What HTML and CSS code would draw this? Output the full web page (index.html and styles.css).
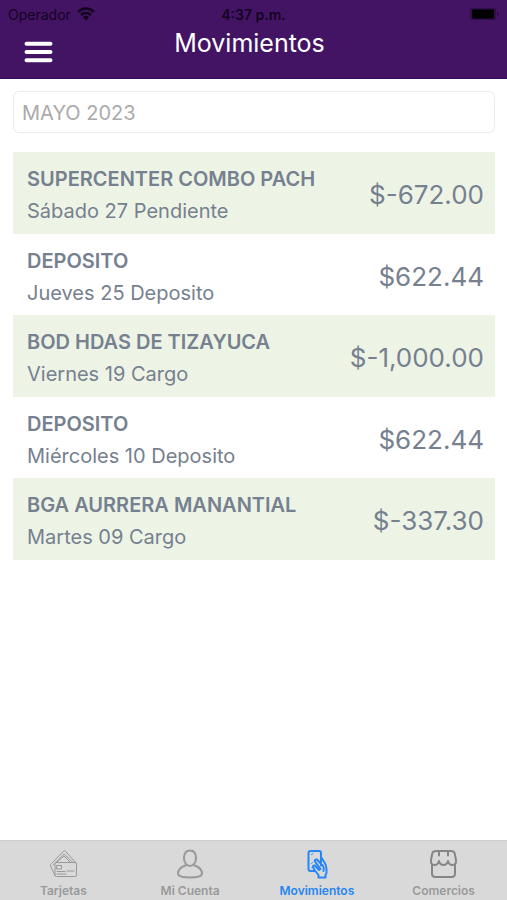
FILE: index.html
```html
<!DOCTYPE html>
<html lang="es">
<head>
<meta charset="utf-8">
<meta name="viewport" content="width=device-width, initial-scale=1">
<title>Movimientos</title>
<link rel="stylesheet" href="styles.css">
</head>
<body>
<header class="header">
  <div class="status">
    <span class="carrier">Operador
      <svg class="wifi" viewBox="0 0 18 14" aria-hidden="true"><path d="M1.2 4.800a11 11 0 0 1 15.600 0M4 8a7.200 7.200 0 0 1 10 0" fill="none" stroke="currentColor" stroke-width="2.600"/><path d="M5.900 10.200a4.500 4.500 0 0 1 6.200 0L9 13.600z" fill="currentColor"/></svg>
    </span>
    <time class="clock">4:37 p.m.</time>
    <svg class="battery" viewBox="0 0 29 12" aria-hidden="true"><rect x="0" y="0" width="26" height="12" rx="2" fill="#310d4b"/><rect x="2" y="1.500" width="22" height="9" rx="1" fill="#000"/><path d="M27 4v4q1.500-.5 1.500-2T27 4z" fill="#28083f"/></svg>
  </div>
  <div class="titlebar">
    <button class="menu" type="button" aria-label="Menú">
      <svg viewBox="0 0 28 22" aria-hidden="true"><path d="M2.500 3h23M2.500 11h23M2.500 19h23" stroke="#fff" stroke-width="4" stroke-linecap="round"/></svg>
    </button>
    <h1 class="title">Movimientos</h1>
  </div>
</header>
<main class="content">
  <input class="month" type="text" value="MAYO 2023" aria-label="Mes" readonly>
  <ul class="list">
    <li class="row"><div><h2 class="name">SUPERCENTER COMBO PACH</h2><p class="detail">Sábado 27 Pendiente</p></div><span class="amount">$-672.00</span></li>
    <li class="row"><div><h2 class="name">DEPOSITO</h2><p class="detail">Jueves 25 Deposito</p></div><span class="amount">$622.44</span></li>
    <li class="row"><div><h2 class="name">BOD HDAS DE TIZAYUCA</h2><p class="detail">Viernes 19 Cargo</p></div><span class="amount">$-1,000.00</span></li>
    <li class="row"><div><h2 class="name">DEPOSITO</h2><p class="detail">Miércoles 10 Deposito</p></div><span class="amount">$622.44</span></li>
    <li class="row"><div><h2 class="name">BGA AURRERA MANANTIAL</h2><p class="detail">Martes 09 Cargo</p></div><span class="amount">$-337.30</span></li>
  </ul>
</main>
<nav class="tabs">
  <a class="tab" href="#tarjetas">
    <svg class="icon thin" viewBox="0 0 30 30" aria-hidden="true"><path d="M8 13.500h19q1.500 0 1.500 1.500v11q0 1.500-1.500 1.500H8.500Q7 27.500 7 26V14.500q0-1 1-1zM7 26.500 2.500 17q-.5-1.500 1-2.500L15.500 2.300q1-.8 2 0L28 14M5 16.500 16 5l9 8.500M8.500 13.500 16 7l6.500 6.500"/><path d="M9 16.500h4.500V20H9zM9 22.500h8M19 22h7M9 25h9"/></svg>
    Tarjetas
  </a>
  <a class="tab" href="#cuenta">
    <svg class="icon" viewBox="0 0 30 30" aria-hidden="true"><path d="M15 1.500c-4 0-6 2.800-6 7.500 0 4 2.200 8 6 8s6-4 6-8c0-4.700-2-7.500-6-7.500zM10.500 16.500C6 18 3 20.500 3 24.500c0 3 5 4 12 4s12-1 12-4c0-4-3-6.500-7.500-8"/></svg>
    Mi Cuenta
  </a>
  <a class="tab active" href="#movimientos" aria-current="page">
    <svg class="icon" viewBox="0 0 30 30" aria-hidden="true"><path d="M12.500 22H8.500Q6.500 22 6.500 20V4Q6.500 2 8.500 2h8.500Q19 2 19 4v12.500M19 8l3.500 5.500q2 3 2 6.500v3.500q0 1.500-1 2.500v2.500h-7V26l-4-5M12.500 21l-1.500-3q0-2 2-1.500l4 4.500 1.500-1-5.500-7.500q-.5-2.500 2-2l6 6.500q1.500 2 .5 5"/><path class="fine" d="M9.500 5.500 11 4.500M9.500 19l1-1M9.500 14.500l1-1"/></svg>
    Movimientos
  </a>
  <a class="tab store" href="#comercios">
    <svg class="icon" viewBox="0 0 30 30" aria-hidden="true"><path d="M7 2h15q3 0 3.700 2.500L27 11q.5 5-3.500 5-3.500 0-4.500-4-1 4-4.500 4T10 12q-1 4-4.500 4-4 0-3.500-5L3.300 4.500Q4 2 7 2zM10 2v4.500M19 2v4.500M3 16v8.500Q3 28 6.500 28h16q3.500 0 3.500-3.500V16"/></svg>
    Comercios
  </a>
</nav>
</body>
</html>
```
FILE: styles.css
```css
* { box-sizing: border-box; }

body {
  margin: 0;
  min-height: 100vh;
  display: flex;
  flex-direction: column;
  background: #fff;
  color: #76808f;
  font-family: Inter, "Liberation Sans", sans-serif;
}

h1, h2, p, ul { margin: 0; padding: 0; }

.header {
  padding-bottom: 10px;
  background: #431464;
  border-bottom: 1px solid #2f0d58;
}

.status {
  display: grid;
  grid-template-columns: 1fr auto 1fr;
  align-items: center;
  height: 28px;
  padding: 0 8px;
  color: #12031f;
  font-size: 14px;
}

.carrier { display: flex; align-items: center; gap: 6px; }
.wifi { width: 18px; height: 14px; }
.clock { font-weight: 600; }
.battery { width: 29px; height: 12px; justify-self: end; }

.titlebar {
  display: grid;
  grid-template-columns: 1fr auto 1fr;
  height: 40px;
  padding: 0 32px 0 24px;
}

.menu {
  justify-self: start;
  align-self: end;
  display: flex;
  padding: 0 0 2px;
  border: 0;
  background: none;
}

.menu svg { width: 29px; height: 28px; }

.title {
  color: #fff;
  font-size: 25px;
  font-weight: 400;
  line-height: 30px;
}

.content { flex: 1; padding: 12px 12px 12px 13px; }

.month {
  display: block;
  width: 100%;
  height: 42px;
  padding: 1px 8px 0;
  border: 1px solid #ebebee;
  border-radius: 6px;
  background: #fff;
  color: #aaa;
  font: 20px Inter, "Liberation Sans", sans-serif;
}

.list { margin-top: 19px; list-style: none; }

.row {
  display: flex;
  align-items: center;
  justify-content: space-between;
  height: 81px;
  padding: 4px 11px 0 14px;
}

.row:nth-child(odd) { height: 82px; background: #edf4e6; }

.name { font-size: 20px; font-weight: 600; line-height: 32px; }
.detail { font-size: 20px; line-height: 32px; }
.amount { font-size: 26px; line-height: 32px; }

.tabs {
  display: grid;
  grid-template-columns: repeat(4, 1fr);
  height: 60px;
  background: #d9d9d9;
  border-top: 1px solid #cdcdcd;
}

.tab {
  display: flex;
  flex-direction: column;
  align-items: center;
  gap: 4px;
  padding-top: 8px;
  color: #999;
  font-size: 12px;
  font-weight: 600;
  line-height: 16px;
  text-decoration: none;
}

.active { color: #2686f3; }

.icon {
  width: 30px;
  height: 30px;
  fill: none;
  stroke: currentColor;
  stroke-width: 2;
  stroke-linecap: round;
  stroke-linejoin: round;
}

.thin { stroke-width: 1; }
.fine { stroke-width: 1; }
.store .icon { stroke: #858786; }
```
